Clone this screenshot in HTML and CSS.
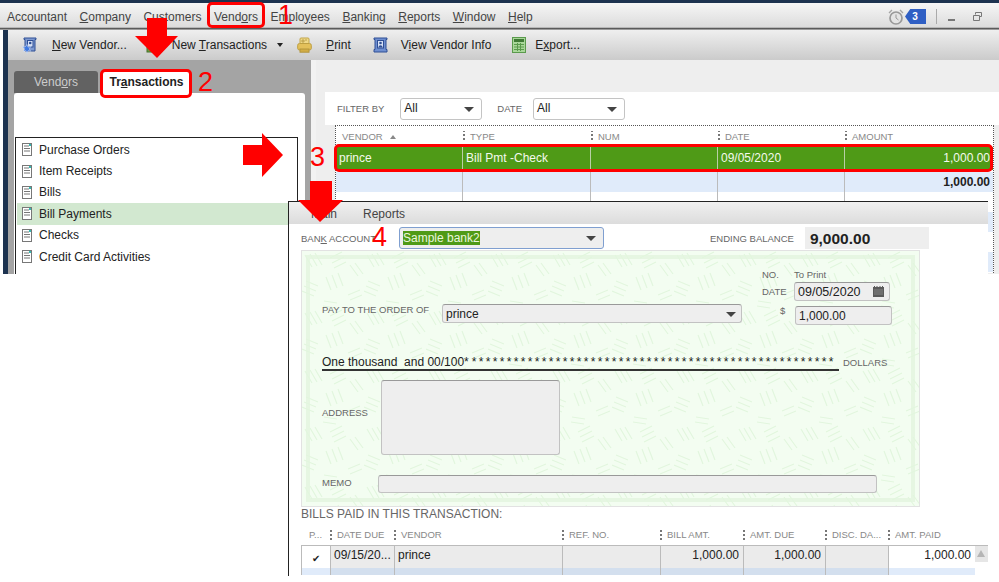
FILE: index.html
```html
<!DOCTYPE html>
<html lang="en">
<head>
    <meta charset="UTF-8">
    <title>Vendor Center - Transactions</title>
    <link rel="stylesheet" href="styles.css">
</head>
<body>
<div class="app">
    <div class="menubar">
        <span>Accountant</span>
        <span><u>C</u>ompany</span>
        <span>Customers</span>
        <span>Vend<u>o</u>rs</span>
        <span>Emplo<u>y</u>ees</span>
        <span><u>B</u>anking</span>
        <span><u>R</u>eports</span>
        <span><u>W</u>indow</span>
        <span><u>H</u>elp</span>
        <div class="menu-right">
            <svg class="alarm" width="16" height="16" viewBox="0 0 16 16"><circle cx="8" cy="9" r="6" fill="#e4e4e4" stroke="#999" stroke-width="1.7"/><path d="M8 5.5V9l2.5 2" fill="none" stroke="#999"/><path d="M1 4l3-3M15 4l-3-3" stroke="#a5a5a5" stroke-width="1.4"/></svg>
            <span class="badge">3</span>
            <span class="sep"></span>
            <span class="min"></span>
            <svg class="restore" width="9" height="9" viewBox="0 0 9 9"><path d="M2.5 2.5V.5h6v4h-2M.5 3.5h6v5h-6z" fill="none" stroke="#777"/></svg>
        </div>
    </div>
    <div class="rule"></div>
    <div class="frame">
        <div class="toolbar">
            <span class="tool t-vendor">
                <svg width="16" height="17" viewBox="0 0 16 17"><path d="M3 1h11v1.5h-1V14H3V2.5H2V1z" fill="#7f9ad0" stroke="#2f4f95"/><rect x="5.5" y="3.5" width="5.5" height="6.5" fill="#d5e0f5" stroke="#2f4f95"/><circle cx="8.2" cy="6" r="1.3" fill="#2f4f95"/><path d="M5 7.5l1 2.6 2.7-.6-1.4 2.4 1.4 2.4-2.7-.6-1 2.6-1-2.6-2.7.6 1.4-2.4L.3 9.5l2.7.6z" fill="#3f78e0" stroke="#e8f0ff" stroke-width=".5"/></svg>
                <span class="tool-label"><u>N</u>ew Vendor...</span>
            </span>
            <span class="tool t-trans">
                <svg width="16" height="16" viewBox="0 0 16 16"><rect x="2" y="8" width="12" height="7" fill="#6c9a3c" stroke="#47702a"/></svg>
                <span class="tool-label">New <u>T</u>ransactions</span>
                <span class="caret"></span>
            </span>
            <span class="tool t-print">
                <svg width="15" height="16" viewBox="0 0 15 16"><rect x="3" y="1" width="9" height="6" rx="1" fill="#efd98a" stroke="#c2a548"/><path d="M5 3h2v2H5zM8 3h2" stroke="#a98d35" fill="none" stroke-width=".7"/><rect x="0.7" y="6.5" width="13.6" height="6.5" rx="1.8" fill="#e3c05a" stroke="#bd9f42"/><rect x="3" y="12" width="9" height="3.2" fill="#d2ad45" stroke="#b3953c"/></svg>
                <span class="tool-label"><u>P</u>rint</span>
            </span>
            <span class="tool t-info">
                <svg width="15" height="16" viewBox="0 0 15 16"><path d="M1 1h13v1.5h-1v10h1V15H1v-2.5h1v-10H1z" fill="#6f8fd0" stroke="#2f4f95"/><rect x="4.5" y="3.5" width="6" height="7.5" fill="#d5e0f5" stroke="#2f4f95"/><circle cx="7.5" cy="6" r="1.3" fill="#2f4f95"/><path d="M5.5 10.5c0-3 4-3 4 0z" fill="#2f4f95"/></svg>
                <span class="tool-label">V<u>i</u>ew Vendor Info</span>
            </span>
            <span class="tool t-export">
                <svg width="14" height="16" viewBox="0 0 14 16"><rect x="0.5" y="0.5" width="13" height="15" fill="#a9d79a" stroke="#5a9a4c"/><rect x="2" y="2" width="10" height="3" fill="#3f7a35"/><path d="M2 7.5h10M2 10h10M2 12.5h10M5.5 6v8M8.5 6v8" stroke="#5a9a4c"/></svg>
                <span class="tool-label">E<u>x</u>port...</span>
            </span>
        </div>
        <div class="workspace">
            <div class="sidebar">
                <div class="tabs">
                    <span class="tab">Vend<u>o</u>rs</span>
                    <span class="tab tab-active">Tr<u>a</u>nsactions</span>
                </div>
                <div class="side-panel">
                    <ul class="tx-list">
                        <li><svg class="doc" viewBox="0 0 10 13"><rect x="0.5" y="0.5" width="9" height="12" fill="#fff" stroke="#777"/><path d="M2 3h5M2 5.5h6M2 8h6" stroke="#777"/><rect x="7" y="1" width="2" height="2" fill="#35b8b0"/></svg>Purchase Orders</li>
                        <li><svg class="doc" viewBox="0 0 10 13"><rect x="0.5" y="0.5" width="9" height="12" fill="#fff" stroke="#777"/><path d="M2 3h5M2 5.5h6M2 8h6" stroke="#777"/><rect x="7" y="1" width="2" height="2" fill="#35b8b0"/></svg>Item Receipts</li>
                        <li><svg class="doc" viewBox="0 0 10 13"><rect x="0.5" y="0.5" width="9" height="12" fill="#fff" stroke="#777"/><path d="M2 3h5M2 5.5h6M2 8h6" stroke="#777"/><rect x="7" y="1" width="2" height="2" fill="#35b8b0"/></svg>Bills</li>
                        <li class="tx-active"><svg class="doc" viewBox="0 0 10 13"><rect x="0.5" y="0.5" width="9" height="12" fill="#fff" stroke="#777"/><path d="M2 3h5M2 5.5h6M2 8h6" stroke="#777"/><rect x="7" y="1" width="2" height="2" fill="#35b8b0"/></svg>Bill Payments</li>
                        <li><svg class="doc" viewBox="0 0 10 13"><rect x="0.5" y="0.5" width="9" height="12" fill="#fff" stroke="#777"/><path d="M2 3h5M2 5.5h6M2 8h6" stroke="#777"/><rect x="7" y="1" width="2" height="2" fill="#35b8b0"/></svg>Checks</li>
                        <li><svg class="doc" viewBox="0 0 10 13"><rect x="0.5" y="0.5" width="9" height="12" fill="#fff" stroke="#777"/><path d="M2 3h5M2 5.5h6M2 8h6" stroke="#777"/><rect x="7" y="1" width="2" height="2" fill="#35b8b0"/></svg>Credit Card Activities</li>
                    </ul>
                </div>
            </div>
            <div class="main">
                <div class="filters">
                    <span class="caps">FILTER BY</span>
                    <span class="select sel-filter">All<i class="arrow"></i></span>
                    <span class="caps date-cap">DATE</span>
                    <span class="select sel-date">All<i class="arrow"></i></span>
                </div>
                <div class="grid">
                    <div class="grid-row grid-head">
                        <span>VENDOR <i class="sort"></i></span><span>TYPE</span><span>NUM</span><span>DATE</span><span>AMOUNT</span>
                    </div>
                    <div class="grid-row grid-sel">
                        <span>prince</span><span>Bill Pmt -Check</span><span></span><span>09/05/2020</span><span class="num">1,000.00</span>
                    </div>
                    <div class="grid-row grid-total">
                        <span></span><span></span><span></span><span></span><span class="num">1,000.00</span>
                    </div>
                    <div class="grid-row grid-empty">
                        <span></span><span></span><span></span><span></span><span></span>
                    </div>
                    <div class="grid-row grid-empty grid-alt">
                        <span></span><span></span><span></span><span></span><span></span>
                    </div>
                    <div class="grid-row grid-empty">
                        <span></span><span></span><span></span><span></span><span></span>
                    </div>
                    <div class="grid-row grid-empty grid-alt">
                        <span></span><span></span><span></span><span></span><span></span>
                    </div>
                </div>
            </div>
        </div>
    </div>
</div>

<div class="bill-window">
    <div class="win-tabs"><span>Main</span><span>Reports</span></div>
    <div class="account-row">
        <span class="caps bank-cap">BAN<u>K</u> ACCOUNT</span>
        <span class="select sel-bank"><b class="picked">Sample bank2</b><i class="arrow"></i></span>
        <span class="caps end-cap">ENDING BALANCE</span>
        <span class="balance">9,000.00</span>
    </div>
    <div class="check">
        <svg class="check-bg" width="100%" height="100%">
            <defs>
                <pattern id="weave" width="62" height="58" patternUnits="userSpaceOnUse">
                    <path d="M3 4l7 12M8 3l7 12M13 2l7 12M28 7l12-6M30 12l12-6M32 17l12-6M48 14l8 11M53 12l8 11M4 30l12 5M2 35l12 5M0 40l12 5M24 26l5 13M30 24l5 13M36 22l5 13M46 44l12-5M48 49l12-5M22 50l13 2M21 55l13 2" fill="none" stroke="#e2f6de" stroke-width="1.2"/>
                </pattern>
            </defs>
            <rect width="100%" height="100%" fill="url(#weave)"/>
        </svg>
        <div class="check-top">
            <div class="check-no">
                <div class="no-line"><span class="caps cap-no">NO.</span><span class="to-print">To Print</span></div>
                <div class="no-line date-line"><span class="caps cap-no">DATE</span>
                    <span class="field f-date">09/05/2020
                        <svg width="11" height="11" viewBox="0 0 11 11"><rect y="1" width="11" height="10" fill="#5a5a5a"/><path d="M1.5 0v2M4 0v2M7 0v2M9.5 0v2" stroke="#5a5a5a"/><path d="M1 4h9M1 6h9M1 8h9" stroke="#9a9a9a" stroke-width=".7"/></svg>
                    </span>
                </div>
            </div>
        </div>
        <div class="pay-row">
            <span class="caps pay-cap">PAY TO THE ORDER OF</span>
            <span class="field f-payee">prince<i class="arrow"></i></span>
            <span class="caps dollar-cap">$</span>
            <span class="field f-amount">1,000.00</span>
        </div>
        <div class="words-row">
            <span class="words">One thousand&nbsp; and 00/100*<span class="stars"> * * * * * * * * * * * * * * * * * * * * * * * * * * * * * * * * * * * * * * * * * * * * * * * * * * * *</span></span>
            <span class="caps dollars">DOLLARS</span>
        </div>
        <div class="addr-row">
            <span class="caps addr-cap">ADDRESS</span>
            <span class="field f-addr"></span>
        </div>
        <div class="memo-row">
            <span class="caps memo-cap">MEMO</span>
            <span class="field f-memo"></span>
        </div>
    </div>
    <div class="bills-title">BILLS PAID IN THIS TRANSACTION:</div>
    <div class="bills">
        <div class="bills-row bills-head">
            <span>P...</span><span>DATE DUE</span><span>VENDOR</span><span>REF. NO.</span><span>BILL AMT.</span><span>AMT. DUE</span><span>DISC. DA...</span><span>AMT. PAID</span>
        </div>
        <div class="bills-row bills-item">
            <span class="tick">&#10004;</span><span>09/15/20...</span><span>prince</span><span></span><span class="num">1,000.00</span><span class="num">1,000.00</span><span></span><span class="num paid">1,000.00</span><span class="scroll-btn"><i></i></span>
        </div>
        <div class="bills-row bills-next">
            <span></span><span></span><span></span><span></span><span></span><span></span><span></span><span></span>
        </div>
    </div>
</div>

<!-- red callouts drawn over the screenshot -->
<div class="callout box-vendors"></div>
<div class="callout box-trans"></div>
<div class="callout box-row"></div>
<span class="step step-1">1</span>
<span class="step step-2">2</span>
<span class="step step-3">3</span>
<span class="step step-4">4</span>
<svg class="arrows" width="999" height="582" viewBox="0 0 999 582">
    <path d="M147 18h20v18h11l-21 22-22-22h12z" fill="#f00"/>
    <path d="M243 145h19v-12l21 22-21 22v-12h-19z" fill="#f00"/>
    <path d="M310 181h22v19h11l-23 22-22-22h12z" fill="#f00"/>
</svg>
</body>
</html>
```

FILE: styles.css
```css
* {
    box-sizing: border-box;
}

html, body {
    margin: 0;
    padding: 0;
}

body {
    position: relative;
    width: 999px;
    height: 582px;
    overflow: hidden;
    background-color: white;
    font-family: "Liberation Sans", Arial, sans-serif;
    font-size: 12px;
    color: #222;
}

.app {
    height: 274px;
    overflow: hidden;
    border-top: 3px solid #1d3350;
}

.menubar {
    display: flex;
    align-items: center;
    gap: 12.5px;
    height: 24px;
    padding: 3px 0 0 7px;
    background: linear-gradient(#f6f6f6, #dcdcdc);
    color: #444;
}

.menu-right {
    display: flex;
    align-items: center;
    margin-left: auto;
    padding-right: 17px;
}

.badge {
    width: 21px;
    height: 15px;
    margin-left: 1px;
    padding-right: 1px;
    background-color: #2f5fc4;
    clip-path: polygon(25% 0, 100% 0, 100% 100%, 25% 100%, 0 50%);
    color: white;
    font-size: 10px;
    font-weight: bold;
    line-height: 15px;
    text-align: center;
}

.sep {
    width: 1px;
    height: 15px;
    margin: 0 11px 0 10px;
    background-color: #aaa;
}

.min {
    width: 7px;
    height: 2px;
    margin: 6px 18px 0 0;
    background-color: #777;
}

.rule {
    height: 3px;
    background: linear-gradient(#fff, #555 40%, #666 70%, #ddd);
}

.frame {
    margin-left: 3px;
    padding-left: 5px;
    height: 244px;
    background-color: #1d3350;
}

.toolbar {
    display: flex;
    align-items: center;
    height: 30px;
    background: linear-gradient(#efefef, #cbcbcb);
    color: #222;
}

.tool {
    display: flex;
    align-items: center;
}

.t-vendor { margin-left: 14px; }
.t-vendor .tool-label { margin-left: 14px; }
.t-trans { margin-left: 18px; }
.t-trans .tool-label { margin-left: 11px; }
.t-print { margin-left: 14px; }
.t-print .tool-label { margin-left: 14px; }
.t-info { margin-left: 22px; }
.t-info .tool-label { margin-left: 13px; }
.t-export { margin-left: 21px; }
.t-export .tool-label { margin-left: 9px; }

.caret {
    width: 0;
    height: 0;
    margin-left: 10px;
    border-left: 3.5px solid transparent;
    border-right: 3.5px solid transparent;
    border-top: 4px solid #222;
}

.workspace {
    display: flex;
    height: 214px;
}

.sidebar {
    display: flex;
    flex-direction: column;
    width: 303px;
    padding: 11px 6px 0 6px;
    background-color: #a4a4a4;
}

.tabs {
    display: flex;
    gap: 5px;
    height: 22px;
}

.tab {
    width: 84px;
    border-radius: 3px 3px 0 0;
    background-color: #626262;
    color: #ccc;
    line-height: 22px;
    text-align: center;
}

.tab-active {
    width: 87px;
    background-color: white;
    color: #222;
    font-weight: bold;
}

.side-panel {
    flex: 1;
    padding: 44px 0 0 1px;
    border-radius: 3px 3px 0 0;
    background-color: white;
}

.tx-list {
    width: 283px;
    margin: 0;
    padding: 1px 0 0;
    height: 140px;
    list-style: none;
    border: 1px solid #222;
    border-bottom: 0;
    background-color: white;
}

.tx-list li {
    display: flex;
    align-items: center;
    height: 21.4px;
    padding-left: 6px;
}

.doc {
    width: 10px;
    height: 13px;
    margin-right: 7px;
}

.tx-active {
    margin-left: 1px;
    padding-left: 5px !important;
    background-color: #d2e8d0;
}

.main {
    flex: 1;
    padding: 32px 0 0 9px;
    border-left: 5px solid #f2f2f2;
    background-color: #eeeeee;
}

.filters {
    display: flex;
    align-items: center;
    height: 33px;
    padding-left: 12px;
    background-color: white;
}

.caps {
    color: #666;
    font-size: 9.5px;
    white-space: nowrap;
}

.select {
    position: relative;
    display: block;
    height: 22px;
    padding-left: 3px;
    border: 1px solid #c4c4c4;
    border-radius: 3px;
    background-color: white;
    color: #222;
    line-height: 19px;
}

.arrow {
    position: absolute;
    right: 7px;
    top: 8px;
    width: 0;
    height: 0;
    border-left: 5px solid transparent;
    border-right: 5px solid transparent;
    border-top: 5px solid #444;
}

.sel-filter { width: 82px; margin-left: 16px; }
.date-cap { margin-left: 15px; }
.sel-date { width: 92px; margin-left: 11px; }

.grid {
    width: 659px;
    height: 148px;
    margin-left: 10px;
    border-top: 1px dotted #555;
    border-left: 1px dotted #555;
    border-right: 1px dotted #555;
    background-color: white;
}

.grid-row {
    display: grid;
    grid-template-columns: 127px 128px 127px 127px 1fr;
}

.grid-head {
    height: 21px;
    align-items: center;
    color: #888;
    font-size: 9.5px;
}

.grid-head span {
    padding-left: 6px;
}

.grid-head span + span {
    padding-left: 7px;
    background: radial-gradient(circle, #777 1px, transparent 1px) 0 2px / 2px 4px repeat-y;
}

.sort {
    display: inline-block;
    width: 0;
    height: 0;
    margin: 0 0 1px 5px;
    border-left: 3.5px solid transparent;
    border-right: 3.5px solid transparent;
    border-bottom: 4px solid #888;
}

.grid-sel {
    height: 23px;
    background-color: #4f9a17;
    color: #f4f9ee;
    line-height: 23px;
}

.grid-sel span,
.grid-total span,
.grid-empty span {
    padding: 0 0 0 3px;
    border-right: 1px solid #b9cfa6;
}

.grid-sel span:last-child,
.grid-total span:last-child,
.grid-empty span:last-child {
    border-right: 0;
}

.grid-total {
    height: 20px;
    margin-top: 2px;
    background-color: #e0ebfa;
    font-weight: bold;
    line-height: 20px;
}

.grid-total span,
.grid-empty span {
    border-right-color: #bbb;
}

.grid-empty {
    height: 20px;
}

.grid-alt {
    background-color: #e0ebfa;
}

.grid .num {
    padding-right: 3px;
    text-align: right;
}

/* second window pasted over the first one */
.bill-window {
    position: absolute;
    left: 288px;
    top: 201px;
    width: 700px;
    height: 375px;
    padding-left: 12px;
    border-top: 1px solid #222;
    border-left: 1px solid #222;
    background-color: white;
}

.win-tabs {
    display: flex;
    gap: 26px;
    height: 22px;
    margin-left: -12px;
    padding-left: 22px;
    background: linear-gradient(#f0f0f0, #dcdcdc);
    color: #444;
    line-height: 24px;
}

.account-row {
    display: flex;
    align-items: center;
    height: 26px;
    padding-top: 2px;
}

.sel-bank {
    width: 205px;
    margin-left: 23px;
    border-color: #7f9fd0;
    background-color: #eeeeee;
    line-height: 20px;
}

.picked {
    background-color: #4f9a17;
    color: #eaf6dc;
    font-weight: normal;
}

.end-cap { margin-left: 106px; }

.balance {
    width: 124px;
    height: 22px;
    margin-left: 11px;
    padding-left: 5px;
    background-color: #eeeeee;
    color: #222;
    font-size: 15.5px;
    font-weight: bold;
    line-height: 23px;
}

.check {
    position: relative;
    width: 619px;
    height: 257px;
    padding: 5px 5px 0 5px;
    border: 1px solid #e2e2e2;
    background-color: #f3fdf1;
    outline: 4px solid #e6f6e2;
    outline-offset: -9px;
}

.check-bg {
    position: absolute;
    left: 0;
    top: 0;
}

.check-top,
.pay-row,
.words-row,
.addr-row,
.memo-row {
    position: relative;
}

.check-top {
    display: flex;
    justify-content: flex-end;
    height: 43px;
    padding: 12px 23px 0 0;
}

.check-no {
    width: 129px;
}

.no-line {
    display: flex;
    align-items: center;
    height: 12px;
}

.cap-no {
    width: 32px;
}

.to-print {
    color: #666;
    font-size: 9.5px;
}

.date-line {
    height: 19px;
    margin-top: 2px;
}

.field {
    position: relative;
    display: block;
    border: 1px solid #c2c2c2;
    border-top-color: #999;
    border-radius: 3px;
    background-color: #eeeeee;
    color: #222;
}

.f-date {
    display: flex;
    justify-content: space-between;
    align-items: center;
    width: 96px;
    height: 19px;
    padding: 0 5px 0 3px;
    font-size: 12.5px;
}

.pay-row {
    display: flex;
    align-items: flex-start;
    height: 53px;
    padding: 5px 0 0 15px;
}

.pay-cap {
    width: 120px;
}

.f-payee {
    width: 300px;
    height: 19px;
    padding-left: 3px;
    line-height: 18px;
}

.f-payee .arrow {
    top: 7px;
    right: 5px;
}

.dollar-cap {
    margin: 1px 0 0 38px;
    width: 15px;
}

.f-amount {
    width: 97px;
    height: 19px;
    margin-top: 2px;
    padding-left: 3px;
    line-height: 18px;
}

.words-row {
    display: flex;
    align-items: flex-end;
    height: 19px;
    padding-left: 15px;
}

.words {
    width: 517px;
    height: 15px;
    white-space: nowrap;
    border-bottom: 2px solid #333;
    line-height: 13px;
    color: #222;
}

.stars {
    letter-spacing: -0.5px;
}

.dollars {
    margin: 0 0 3px 4px;
}

.addr-row {
    display: flex;
    align-items: flex-start;
    height: 75px;
    margin-top: 9px;
    padding-left: 15px;
}

.addr-cap {
    width: 59px;
    margin-top: 27px;
}

.f-addr {
    width: 179px;
    height: 75px;
}

.memo-row {
    display: flex;
    align-items: flex-start;
    height: 18px;
    margin-top: 20px;
    padding-left: 15px;
}

.memo-cap {
    width: 56px;
    margin-top: 2px;
}

.f-memo {
    width: 499px;
    height: 18px;
}

.bills-title {
    height: 21px;
    color: #666;
    font-size: 12px;
}

.bills {
    width: 687px;
}

.bills-row {
    display: grid;
    grid-template-columns: 29px 64px 168px 98px 83px 82px 63px 87px 13px;
}

.bills-head {
    height: 14px;
    color: #888;
    font-size: 9.5px;
    line-height: 14px;
}

.bills-head span {
    padding-left: 7px;
    white-space: nowrap;
    background: radial-gradient(circle, #777 1px, transparent 1px) 0 1px / 2px 4px repeat-y;
}

.bills-head span:first-child {
    background: none;
    padding-left: 8px;
}

.bills-item {
    height: 23px;
    margin-top: 3px;
    border-top: 1px solid #bbb;
    line-height: 19px;
}

.bills-item span,
.bills-next span {
    padding: 0 3px;
    border-left: 1px solid #bbb;
    background-color: #ebebeb;
}

.bills-item .num {
    padding-right: 4px;
    text-align: right;
}

.bills-item .tick {
    background-color: white;
    text-align: center;
    font-size: 10px;
    line-height: 25px;
}

.bills-item .paid {
    background-color: white;
}

.bills-item .scroll-btn {
    height: 16px;
    padding: 4px 0 0 2px;
    border-left: 0;
    background-color: #e6e6e6;
}

.scroll-btn i {
    display: block;
    width: 0;
    height: 0;
    border-left: 4.5px solid transparent;
    border-right: 4.5px solid transparent;
    border-bottom: 7px solid #b5b5b5;
}

.bills-next {
    height: 7px;
}

.bills-next span {
    background-color: #d3dfee;
}

.bills-next span:first-child,
.bills-next span:last-child {
    background-color: #e0ebfa;
}

/* annotations */
.callout {
    position: absolute;
    border: 3px solid #f00;
    border-radius: 5px;
}

.box-vendors { left: 207px; top: 2px; width: 58px; height: 26px; }
.box-trans { left: 100px; top: 69px; width: 92px; height: 29px; }
.box-row { left: 334px; top: 144px; width: 659px; height: 28px; }

.step {
    position: absolute;
    color: #f00;
    font-size: 27px;
    line-height: 27px;
}

.step-1 { left: 278px; top: 2px; }
.step-2 { left: 198px; top: 69px; }
.step-3 { left: 310px; top: 144px; }
.step-4 { left: 372px; top: 224px; }

.arrows {
    position: absolute;
    left: 0;
    top: 0;
    pointer-events: none;
}
```
